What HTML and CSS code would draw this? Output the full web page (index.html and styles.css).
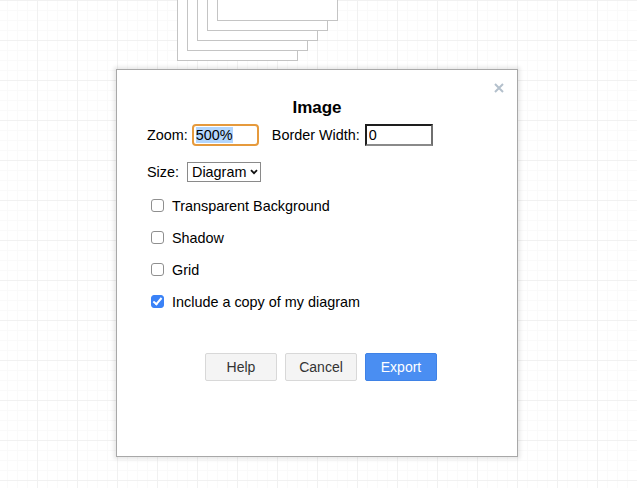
FILE: index.html
```html
<!DOCTYPE html>
<html lang="en">
<head>
<meta charset="utf-8">
<title>Image export dialog</title>
<link rel="stylesheet" href="styles.css">
</head>
<body>
<div class="canvas">
  <div class="shape s1"></div>
  <div class="shape s2"></div>
  <div class="shape s3"></div>
  <div class="shape s4"></div>
  <div class="shape s5"></div>

  <div class="dialog">
    <button class="close" aria-label="Close">
      <svg width="10" height="10" viewBox="0 0 10 10"><path d="M1 1L9 9M9 1L1 9" stroke="#b4c0cc" stroke-width="2" fill="none"/></svg>
    </button>
    <h1 class="title">Image</h1>
    <div class="row row-zoom">
      <label class="lbl">Zoom:</label>
      <span class="field field-focus"><span class="sel">500%</span></span>
      <label class="lbl lbl-border">Border Width:</label>
      <input class="field field-plain" type="text" value="0">
    </div>
    <div class="row row-size">
      <label class="lbl lbl-size">Size:</label>
      <span class="select-wrap">
        <select class="select"><option>Diagram</option></select>
        <svg class="chev" width="8" height="6" viewBox="0 0 8 6"><path d="M1 1.2L4 4.2L7 1.2" stroke="#111" stroke-width="1.8" fill="none"/></svg>
      </span>
    </div>
    <div class="checks">
      <label class="check"><input type="checkbox"><span>Transparent Background</span></label>
      <label class="check"><input type="checkbox"><span>Shadow</span></label>
      <label class="check"><input type="checkbox"><span>Grid</span></label>
      <label class="check"><input type="checkbox" checked><span>Include a copy of my diagram</span></label>
    </div>
    <div class="buttons">
      <button class="btn">Help</button>
      <button class="btn">Cancel</button>
      <button class="btn btn-primary">Export</button>
    </div>
  </div>
</div>
</body>
</html>
```

FILE: styles.css
```css
* { box-sizing: border-box; }
html, body { margin: 0; padding: 0; }
body {
  font-family: "Liberation Sans", Arial, Helvetica, sans-serif;
  font-size: 14.4px;
  color: #000;
}
.canvas {
  position: relative;
  width: 637px;
  height: 488px;
  overflow: hidden;
  background-color: #fff;
  background-image:
    linear-gradient(to right, #f1f1f1 1px, transparent 1px),
    linear-gradient(to bottom, #f1f1f1 1px, transparent 1px),
    linear-gradient(to right, #fafafa 1px, transparent 1px),
    linear-gradient(to bottom, #fafafa 1px, transparent 1px);
  background-size: 40px 40px, 40px 40px, 10px 10px, 10px 10px;
  background-position: -3px 0, -3px 0, -3px 0, -3px 0;
}
.shape {
  position: absolute;
  width: 121px;
  height: 101px;
  background: #fff;
  border: 1px solid #c4c4c4;
}
.s1 { left: 177px; top: -40px; }
.s2 { left: 187px; top: -50px; }
.s3 { left: 197px; top: -60px; }
.s4 { left: 207px; top: -70px; }
.s5 { left: 217px; top: -80px; }

.dialog {
  position: absolute;
  left: 116px;
  top: 69px;
  width: 402px;
  height: 388px;
  background: #fff;
  border: 1px solid #a8a8a8;
  box-shadow: 0 0 4px 2px rgba(0, 0, 0, 0.1);
  padding-top: 28px;
  display: flex;
  flex-direction: column;
}
.close {
  position: absolute;
  right: 13px;
  top: 13px;
  width: 10px;
  height: 10px;
  padding: 0;
  border: 0;
  background: none;
  display: block;
}
.close svg { display: block; }
.title {
  margin: 0;
  text-align: center;
  font-size: 17px;
  line-height: 20px;
  font-weight: bold;
}
.row {
  display: flex;
  align-items: center;
  padding-left: 30px;
}
.lbl { line-height: 20px; white-space: nowrap; }
.row-zoom { margin-top: 6px; height: 22px; gap: 4px; }
.lbl-border { margin-left: 9px; margin-right: 1px; }
.field {
  width: 67px;
  height: 22px;
  font: 14.4px "Liberation Sans", Arial, Helvetica, sans-serif;
  color: #000;
  background: #fff;
  padding: 0 2px;
}
.field-focus {
  display: flex;
  align-items: center;
  border: 2px solid #e69a3c;
  border-radius: 4px;
}
.sel {
  background: #b3d6fd;
  line-height: 16px;
}
.field-plain {
  width: 68px;
  border: 2px solid;
  border-color: #1e1e1e #6f6f6f #8a8a8a #1e1e1e;
  border-radius: 0;
  outline: none;
}
.row-size { margin-top: 16px; height: 20px; gap: 8px; }
.select-wrap {
  position: relative;
  display: block;
  width: 74px;
  height: 20px;
}
.select {
  appearance: none;
  -webkit-appearance: none;
  width: 74px;
  height: 20px;
  border: 1px solid #8a8a8a;
  border-radius: 0;
  background: #fff;
  padding: 0 0 0 4px;
  font: 14.4px "Liberation Sans", Arial, Helvetica, sans-serif;
  color: #000;
  margin: 0;
}
.chev {
  position: absolute;
  right: 3px;
  top: 7px;
  pointer-events: none;
}
.checks {
  margin-top: 16px;
  padding-left: 34px;
  display: flex;
  flex-direction: column;
  gap: 16px;
}
.check {
  display: flex;
  align-items: flex-start;
  height: 16px;
  line-height: 16px;
}
.check input {
  appearance: none;
  -webkit-appearance: none;
  position: relative;
  width: 13px;
  height: 13px;
  margin: 1px 8px 0 0;
  border: 1px solid #8f8f8f;
  border-radius: 3px;
  background: #fff;
  flex: none;
}
.check input:checked {
  background: #3a82f7;
  border-color: #3a82f7;
}
.check input:checked::after {
  content: "";
  position: absolute;
  left: 3px;
  top: 0px;
  width: 3px;
  height: 7px;
  border: solid #fff;
  border-width: 0 2px 2px 0;
  transform: rotate(40deg);
}
.buttons {
  margin-top: 43px;
  padding-left: 88px;
  display: flex;
  gap: 8px;
}
.btn {
  width: 72px;
  height: 28px;
  border: 1px solid #d8d8d8;
  border-radius: 2px;
  background: #f4f4f4;
  color: #333;
  font: 14px "Liberation Sans", Arial, Helvetica, sans-serif;
  padding: 0;
}
.btn-primary {
  background: #4a8ef2;
  border-color: #3f82e6;
  color: #fff;
}
```
